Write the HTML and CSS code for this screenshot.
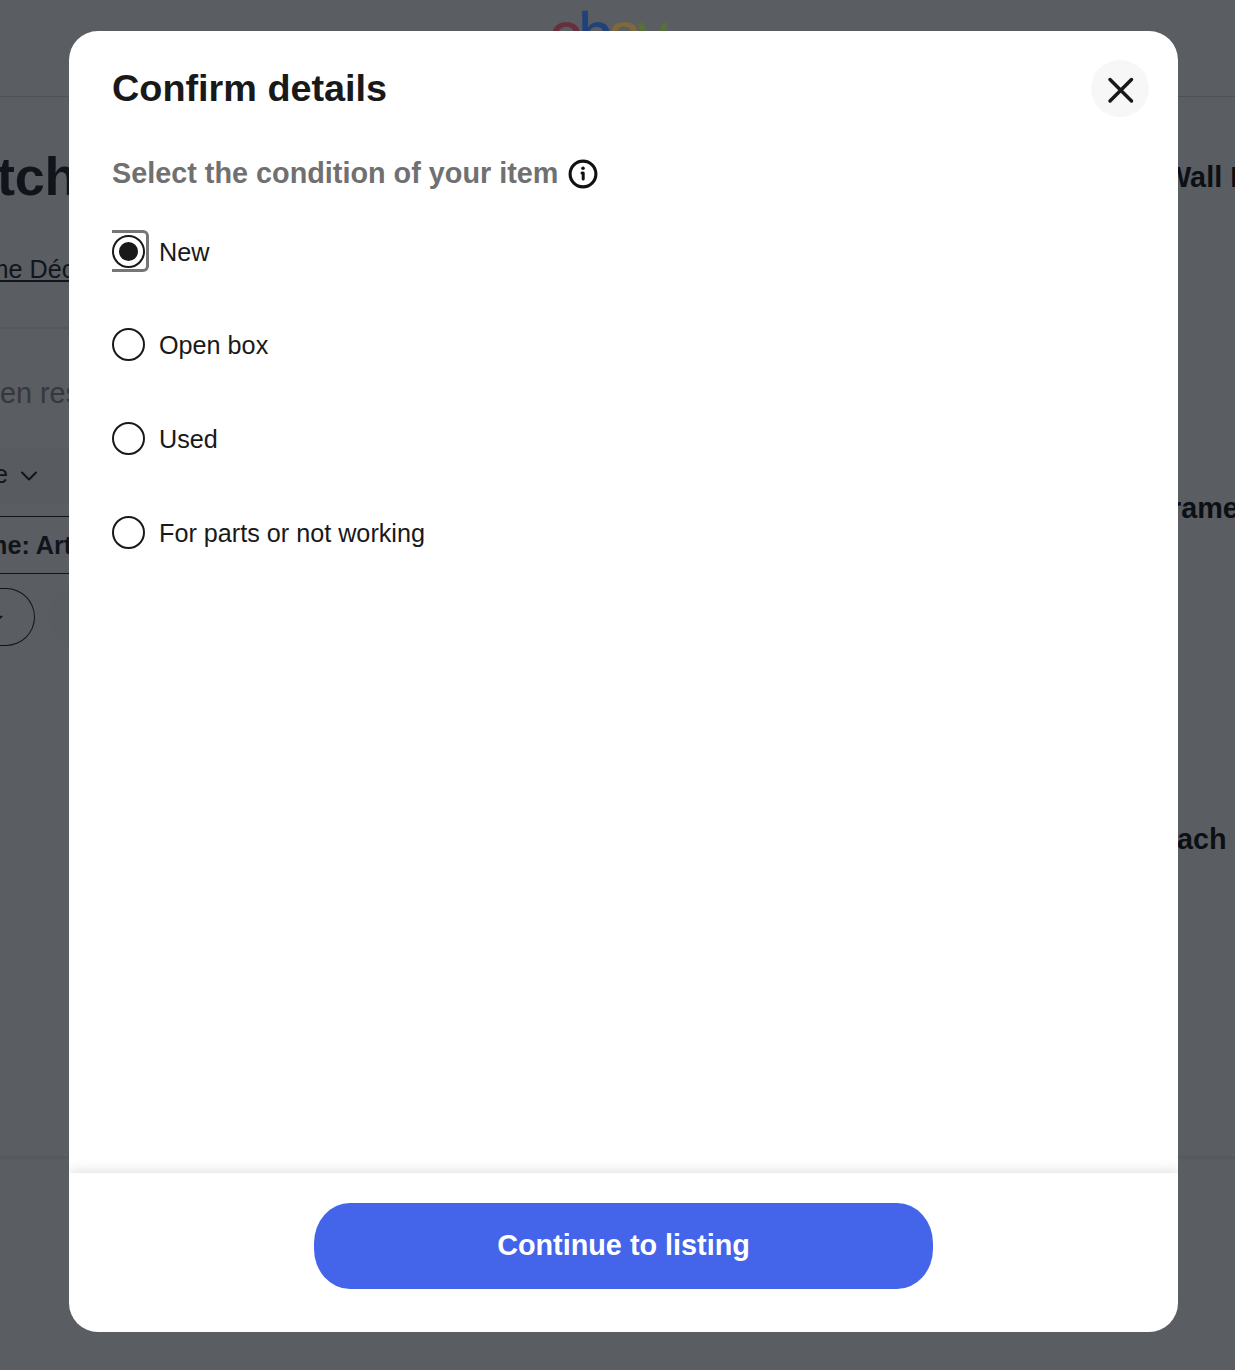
FILE: index.html
```html
<!DOCTYPE html>
<html lang="en">
<head>
<meta charset="utf-8">
<title>Confirm details</title>
<link rel="stylesheet" href="styles.css">
</head>
<body>
<div class="page">
  <header class="page-header">
    <div class="logo" aria-label="ebay"><span class="logo-e">e</span><span class="logo-b">b</span><span class="logo-a">a</span><span class="logo-y">y</span></div>
  </header>
  <div class="page-body">
    <main class="filters">
      <div class="match-head">
        <h2 class="match-title">tch</h2>
        <div class="category">me Déc</div>
      </div>
      <div class="results">en res</div>
      <div class="dropdown">e
        <svg class="chevron" width="18" height="12" viewBox="0 0 18 12"><path d="M2 2.5 9 9.5 16 2.5"/></svg>
      </div>
      <div class="chip">me: Art</div>
      <div class="pill-row"><div class="pill"><svg width="6" height="8" viewBox="0 0 6 8"><path d="M-3 7 1.5 3.5"/></svg></div><div class="pill-soft"></div></div>
    </main>
    <aside class="items">
      <div class="item item-wall">Wall F</div>
      <div class="item item-frame">rame</div>
      <div class="item item-each">ach</div>
    </aside>
  </div>
  <div class="page-footer"></div>
</div>

<section class="dialog" role="dialog" aria-labelledby="dialog-title">
  <header class="dialog-header">
    <h1 class="dialog-title" id="dialog-title">Confirm details</h1>
    <button class="close" aria-label="Close">
      <svg width="28" height="28" viewBox="0 0 28 28"><path d="M3 3.5 24.5 25M24.5 3.5 3 25"/></svg>
    </button>
  </header>
  <div class="dialog-body">
    <div class="question">Select the condition of your item
      <svg class="info" width="30" height="30" viewBox="0 0 30 30"><circle class="info-ring" cx="15" cy="15" r="12.9"/><circle cx="15" cy="9.3" r="1.8"/><path d="M14 14h1.2v6" /></svg>
    </div>
    <div class="options">
      <div class="option"><span class="focus"><span class="radio checked"></span></span><span class="label">New</span></div>
      <div class="option"><span class="radio"></span><span class="label">Open box</span></div>
      <div class="option"><span class="radio"></span><span class="label">Used</span></div>
      <div class="option"><span class="radio"></span><span class="label">For parts or not working</span></div>
    </div>
  </div>
  <footer class="dialog-footer">
    <button class="continue">Continue to listing</button>
  </footer>
</section>
</body>
</html>
```

FILE: styles.css
```css
* { box-sizing: border-box; }
body {
  margin: 0;
  height: 1370px;
  overflow: hidden;
  background: #5a5d62;
  color: #191919;
  font-family: "Liberation Sans", Arial, sans-serif;
  font-size: 25.2px;
}
h1, h2 { margin: 0; }
button { border: 0; padding: 0; font-family: inherit; }

.page { height: 1370px; overflow: hidden; color: #11151b; white-space: nowrap; }
.page-header {
  height: 97px;
  border-bottom: 1px solid #4e5156;
  padding: 4px 0 0 549px;
}
.logo {
  height: 60px;
  font-size: 62px;
  line-height: 60px;
  letter-spacing: -5.2px;
  -webkit-text-stroke: .4px;
}
.logo-e { color: #672e3b; }
.logo-b { color: #20427b; }
.logo-a { color: #80683a; }
.logo-y { color: #5a7039; }

.page-body { display: flex; justify-content: space-between; height: 1059px; }
.filters { width: 80px; }
.match-head { height: 232px; padding-top: 48px; border-bottom: 2px solid #54575c; }
.match-title { margin-left: -3px; font-size: 54px; line-height: 62px; letter-spacing: -.2px; }
.category {
  margin: 46px 0 0 -12.5px;
  height: 29px;
  line-height: 33px;
  border-bottom: 2px solid #11151b;
}
.results {
  height: 120px;
  padding-top: 47px;
  font-size: 28.8px;
  line-height: 34px;
  color: #35383d;
}
.dropdown {
  display: flex;
  align-items: center;
  gap: 12px;
  height: 54px;
  margin-left: -6px;
  padding-bottom: 4px;
  background: #585b60;
}
.chevron { fill: none; stroke: #11151b; stroke-width: 2; stroke-linecap: round; stroke-linejoin: round; margin-top: 4px; }
.chip {
  height: 58px;
  margin-top: 13px;
  border: solid #11151b;
  border-width: 1px 0;
  line-height: 56px;
  text-indent: -15px;
  font-weight: bold;
}
.pill-row { display: flex; align-items: center; gap: 14px; margin-top: 14px; }
.pill {
  display: flex;
  align-items: center;
  flex: none;
  width: 35px;
  height: 58px;
  border: 1px solid #11151b;
  border-left: 0;
  border-radius: 0 29px 29px 0;
}
.pill svg { stroke: #11151b; stroke-width: 2; stroke-linecap: round; }
.pill-soft { width: 40px; height: 58px; border-radius: 29px 0 0 29px; background: #595c61; }

.items { width: 71px; padding-top: 64px; font-size: 28.8px; font-weight: bold; color: #0c1015; }
.item { height: 331px; line-height: 33px; }
.item-frame { margin-left: 6px; }
.item-each { margin-left: 13px; }
.page-footer { height: 214px; border-top: 3px solid #56595e; }

/* Modal window over the dimmed page */
.dialog {
  position: absolute;
  top: 31px;
  left: 69px;
  display: flex;
  flex-direction: column;
  width: 1109px;
  height: 1301px;
  border-radius: 29px;
  background: #fff;
  overflow: hidden;
}
.dialog-header {
  display: flex;
  justify-content: space-between;
  align-items: center;
  height: 115px;
  padding: 0 29px 0 43px;
}
.dialog-title { padding-bottom: 2px; font-size: 37.8px; line-height: 44px; }
.close {
  display: flex;
  align-items: center;
  justify-content: center;
  width: 58px;
  height: 57px;
  padding: 3px 0 0 1px;
  border-radius: 50%;
  background: #f7f7f7;
}
.close svg { fill: none; stroke: #191919; stroke-width: 3.5; stroke-linecap: round; }
.dialog-body { flex: 1; padding: 10px 43px 0; }
.question {
  display: flex;
  align-items: center;
  gap: 10px;
  height: 34px;
  color: #707070;
  font-size: 28.8px;
  font-weight: bold;
}
.info { fill: #111; margin-top: 1px; }
.info path { fill: none; stroke: #111; stroke-width: 3; stroke-linecap: round; stroke-linejoin: round; }
.info .info-ring { fill: none; stroke: #111; stroke-width: 3.1; }
.options { display: flex; flex-direction: column; gap: 51.6px; padding-top: 40.4px; }
.option { display: flex; align-items: center; height: 42px; }
.label { padding-top: 2px; }
.radio {
  display: flex;
  align-items: center;
  justify-content: center;
  width: 33px;
  height: 33px;
  margin-right: 14px;
  border: 2px solid #191919;
  border-radius: 50%;
}
.checked { margin: 0; }
.checked::after { content: ""; width: 19px; height: 19px; border-radius: 50%; background: #191919; }
.focus {
  display: flex;
  align-items: center;
  width: 37px;
  height: 42px;
  margin-right: 10px;
  border: 3px solid #767676;
  border-left: 0;
  border-radius: 0 6px 6px 0;
}
.dialog-footer {
  display: flex;
  justify-content: center;
  height: 159px;
  padding-top: 30px;
  box-shadow: 0 -2px 12px rgba(0, 0, 0, .13);
}
.continue {
  width: 619px;
  height: 86px;
  padding-bottom: 2px;
  border-radius: 36px / 40px;
  background: #4465e9;
  color: #fff;
  font-size: 28.8px;
  font-weight: bold;
}
```
